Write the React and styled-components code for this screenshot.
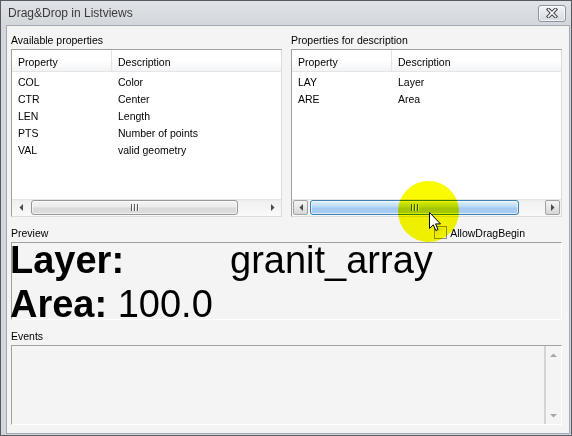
import styled, { createGlobalStyle } from 'styled-components'

const GlobalStyle = createGlobalStyle`
	html, body {
		margin: 0;
		padding: 0;
		width: 572px;
		height: 436px;
		overflow: hidden;
		background: #d3d7dc;
	}
	body {
		font-family: "Liberation Sans", Arial, sans-serif;
		color: #000;
	}
	* { box-sizing: border-box; }
`

const color = {
	face: '#f4f4f4',
	frame: '#d3d7dc',
	line: '#a0a0a0',
	light: '#e5e5e5',
}

const available = [
	['COL', 'Color'],
	['CTR', 'Center'],
	['LEN', 'Length'],
	['PTS', 'Number of points'],
	['VAL', 'valid geometry'],
]

const chosen = [
	['LAY', 'Layer'],
	['ARE', 'Area'],
]

const Window = styled.div`
	position: relative;
	width: 572px;
	height: 436px;
	display: flex;
	flex-direction: column;
	border: 1px solid #535a62;
	padding: 0 1px 1px 5px;
	background: linear-gradient(#dfe2e6, ${color.frame} 24px, ${color.frame});
`

const TitleBar = styled.div`
	height: 24px;
	display: flex;
	align-items: center;
	justify-content: space-between;
`

const Title = styled.span`
	padding-left: 2px;
	font-size: 12px;
	color: #3a3a3a;
`

const CloseButton = styled.div`
	width: 28px;
	height: 17px;
	margin-right: 4px;
	display: flex;
	align-items: center;
	justify-content: center;
	border: 1px solid #8a95a4;
	border-radius: 3px;
	background: linear-gradient(#f4f5f7, #e3e6ea 50%, #d6dadf);
	box-shadow: inset 0 0 0 1px rgba(255,255,255,0.7);
`

const Client = styled.div`
	flex: 1;
	display: flex;
	flex-direction: column;
	border: 1px solid #a3aab2;
	background: ${color.face};
	padding: 8px 7px 0 4px;
`

const ListsRow = styled.div`
	display: grid;
	grid-template-columns: 1fr 1fr;
	column-gap: 9px;
`

const Pane = styled.div`
	display: flex;
	flex-direction: column;
`

const Label = styled.div`
	font-size: 10.5px;
	line-height: 12px;
	height: 12px;
	white-space: nowrap;
	margin-top: ${p => p.$top || 0}px;
	margin-bottom: 3px;
`

const ListBox = styled.div`
	height: 168px;
	display: flex;
	flex-direction: column;
	background: #fff;
	border: 1px solid;
	border-color: ${color.line} #dcdcdc #dcdcdc ${color.line};
`

const Header = styled.div`
	display: grid;
	grid-template-columns: 100px 1fr;
	height: 22px;
	border-bottom: 1px solid ${color.light};
	background: linear-gradient(#fff 50%, #f3f4f6);
`

const HeaderCell = styled.div`
	padding: 6px 0 0 6px;
	font-size: 10.5px;
	line-height: 13px;
	border-right: 1px solid ${color.light};
	&:last-child { border-right: none; }
`

const Rows = styled.div`
	flex: 1;
	padding-top: 2px;
`

const Row = styled.div`
	display: grid;
	grid-template-columns: 100px 1fr;
	height: 17px;
	line-height: 17px;
	font-size: 10.5px;
`

const Cell = styled.div`
	padding-left: 6px;
	white-space: nowrap;
`

const HScroll = styled.div`
	height: 17px;
	display: flex;
	background: linear-gradient(#e2e2e2, #f0f0f0 2px, #fafafa);
`

const ArrowButton = styled.div`
	width: 17px;
	height: 17px;
	padding: 1px;
	display: flex;

	& > span {
		flex: 1;
		display: flex;
		align-items: center;
		justify-content: center;
		border: 1px solid ${p => (p.$hot ? '#a2a2a2' : 'transparent')};
		border-radius: 2px;
		background: ${p => (p.$hot ? 'linear-gradient(#f4f4f4, #e6e6e6 50%, #d6d6d6)' : 'none')};
	}
`

const Track = styled.div`
	flex: 1;
	display: flex;
	align-items: center;
	padding-left: ${p => p.$offset}px;
`

const Thumb = styled.div`
	width: ${p => p.$width}px;
	height: 15px;
	display: flex;
	align-items: center;
	justify-content: center;
	border: 1px solid ${p => (p.$hot ? '#3c7fb1' : '#979797')};
	border-radius: 3px;
	background: ${p =>
		p.$hot
			? 'linear-gradient(#e0f0fd, #b9d9f7 45%, #a5c9f1 55%, #aacdf3)'
			: 'linear-gradient(#f3f3f3, #ebebeb 45%, #d9d9d9 55%, #dcdcdc)'};
	box-shadow: inset 0 0 0 1px rgba(255,255,255,0.6);
`

const Grip = styled.span`
	width: 8px;
	height: 7px;
	background: repeating-linear-gradient(
		90deg,
		${p => (p.$hot ? '#2d5a8a' : '#555')} 0 1px,
		${p => (p.$hot ? '#e8f3fd' : '#fafafa')} 1px 2px,
		transparent 2px 3px
	);
`

const PreviewHeader = styled.div`
	height: 25px;
	display: flex;
	align-items: flex-end;
	justify-content: space-between;
	padding: 0 37px 3px 0;

	& > ${Label} { margin-bottom: 0; }
`

const CheckGroup = styled.label`
	display: flex;
	align-items: center;
	gap: 3px;
	font-size: 10.5px;
	line-height: 12px;
`

const CheckBox = styled.span`
	width: 13px;
	height: 13px;
	border: 1px solid #8e8f8f;
	background: linear-gradient(135deg, #dcdcdc, #f6f6f6 70%, #fff);
	box-shadow: inset 0 0 0 1px #f4f4f4;
`

const PreviewBox = styled.div`
	height: 78px;
	border: 1px solid;
	border-color: ${color.line} #fff #fff ${color.line};
	background: ${color.face};
	font-size: 38px;
	padding-left: 0;
`

const PreviewLine = styled.div`
	height: 34px;
	line-height: 34px;
	margin: ${p => (p.$first ? 0 : 10)}px 0 0 -2px;
	white-space: pre;
`

const Key = styled.span`
	display: inline-block;
	min-width: ${p => p.$tab || 0}px;
	font-weight: 700;
`

const Value = styled.span`
	font-weight: 400;
`

const EventsBox = styled.div`
	height: 80px;
	display: flex;
	border: 1px solid;
	border-color: ${color.line} #fff #fff ${color.line};
	background: ${color.face};
`

const EventsText = styled.div`
	flex: 1;
`

const VScroll = styled.div`
	width: 17px;
	display: flex;
	flex-direction: column;
	justify-content: space-between;
	border-left: 2px solid #d4d4d4;

	& > span {
		height: 17px;
		display: flex;
		align-items: center;
		justify-content: center;
	}
`

const Highlight = styled.div`
	position: absolute;
	left: 397px;
	top: 180px;
	width: 61px;
	height: 61px;
	border-radius: 50%;
	background: #fafa00;
	mix-blend-mode: multiply;
	pointer-events: none;
`

const Cursor = styled.svg`
	position: absolute;
	left: 428px;
	top: 211px;
	pointer-events: none;
`

const Arrow = ({ dir, fill = '#4a4a4a' }) => {
	const shapes = {
		left: '5,0 5,7 1.5,3.5',
		right: '1,0 1,7 4.5,3.5',
		up: '0,4 7,4 3.5,0.5',
		down: '0,0 7,0 3.5,3.5',
	}
	const vertical = dir === 'up' || dir === 'down'
	return (
		<svg width={vertical ? 7 : 6} height={vertical ? 4 : 7}>
			<polygon points={shapes[dir]} fill={fill} />
		</svg>
	)
}

const ScrollBar = ({ hot, offset, width }) => (
	<HScroll>
		<ArrowButton $hot={hot}><span><Arrow dir="left" /></span></ArrowButton>
		<Track $offset={offset}>
			<Thumb $hot={hot} $width={width}><Grip $hot={hot} /></Thumb>
		</Track>
		<ArrowButton $hot={hot}><span><Arrow dir="right" /></span></ArrowButton>
	</HScroll>
)

const ListPane = ({ label, items, hot, offset, width }) => (
	<Pane>
		<Label>{label}</Label>
		<ListBox>
			<Header>
				<HeaderCell>Property</HeaderCell>
				<HeaderCell>Description</HeaderCell>
			</Header>
			<Rows>
				{items.map(([code, desc]) => (
					<Row key={code}>
						<Cell>{code}</Cell>
						<Cell>{desc}</Cell>
					</Row>
				))}
			</Rows>
			<ScrollBar hot={hot} offset={offset} width={width} />
		</ListBox>
	</Pane>
)

export default function App() {
	return (
		<>
			<GlobalStyle />
			<Window>
				<TitleBar>
					<Title>Drag&amp;Drop in Listviews</Title>
					<CloseButton>
						<svg width="12" height="10">
							<path d="M2.5 1.5 L9.5 8.5 M9.5 1.5 L2.5 8.5" stroke="#3b3f45" strokeWidth="3.6" strokeLinecap="square" />
							<path d="M2.5 1.5 L9.5 8.5 M9.5 1.5 L2.5 8.5" stroke="#fff" strokeWidth="1.6" strokeLinecap="square" />
						</svg>
					</CloseButton>
				</TitleBar>
				<Client>
					<ListsRow>
						<ListPane label="Available properties" items={available} offset={2} width={207} />
						<ListPane label="Properties for description" items={chosen} hot offset={1} width={209} />
					</ListsRow>
					<PreviewHeader>
						<Label>Preview</Label>
						<CheckGroup>
							<CheckBox />
							AllowDragBegin
						</CheckGroup>
					</PreviewHeader>
					<PreviewBox>
						<PreviewLine $first>
							<Key $tab={220}>Layer:</Key><Value>granit_array</Value>
						</PreviewLine>
						<PreviewLine>
							<Key>Area: </Key><Value>100.0</Value>
						</PreviewLine>
					</PreviewBox>
					<Label $top={10}>Events</Label>
					<EventsBox>
						<EventsText />
						<VScroll>
							<span><Arrow dir="up" fill="#a6a6a6" /></span>
							<span><Arrow dir="down" fill="#a6a6a6" /></span>
						</VScroll>
					</EventsBox>
				</Client>
				<Highlight />
				<Cursor width="13" height="20" viewBox="0 0 13 20">
					<path d="M0.5 0.5 L0.5 16.5 L4.3 12.8 L6.8 18.5 L9 17.5 L6.6 11.9 L11.5 11.9 Z" fill="#fff" stroke="#000" strokeWidth="1" strokeLinejoin="miter" />
				</Cursor>
			</Window>
		</>
	)
}
